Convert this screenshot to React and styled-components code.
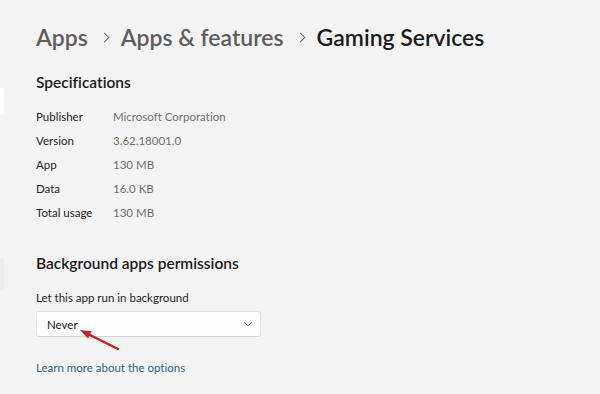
import styled, { createGlobalStyle } from "styled-components";

const GlobalStyle = createGlobalStyle`
  html, body {
    margin: 0;
    padding: 0;
    background: #f3f3f3;
  }
  body {
    font-family: Lato, "Noto Sans", sans-serif;
    font-variant-ligatures: none;
    color: #1b1b1b;
  }
`;

const specs = [
  ["Publisher", "Microsoft Corporation"],
  ["Version", "3.62.18001.0"],
  ["App", "130 MB"],
  ["Data", "16.0 KB"],
  ["Total usage", "130 MB"],
];

function App() {
  return (
    <>
      <GlobalStyle />
      <Page>
        <EdgeTab $top={88} $height={27} $bg="#ffffff" />
        <EdgeTab $top={258} $height={32} $bg="#ececec" />
        <Breadcrumb>
          <Crumb>Apps</Crumb>
          <Chevron />
          <Crumb>Apps &amp; features</Crumb>
          <Chevron />
          <Crumb $current>Gaming Services</Crumb>
        </Breadcrumb>

        <SectionTitle>Specifications</SectionTitle>
        <SpecList>
          {specs.map(([label, value]) => (
            <SpecRow key={label}>
              <SpecLabel>{label}</SpecLabel>
              <SpecValue>{value}</SpecValue>
            </SpecRow>
          ))}
        </SpecList>

        <SectionTitle $gap={27}>Background apps permissions</SectionTitle>
        <FieldLabel>Let this app run in background</FieldLabel>
        <SelectWrap>
          <Select>
            <span>Never</span>
            <svg width="10" height="6" viewBox="0 0 10 6">
              <path d="M1 1l4 4 4-4" fill="none" stroke="#7a7a7a" strokeWidth="1" />
            </svg>
          </Select>
          <Arrow width="50" height="30" viewBox="0 0 50 30">
            <path d="M44 26 L14 11" stroke="#cc1f1f" strokeWidth="2.4" strokeLinecap="round" />
            <path d="M6 7 L17.6 8.3 L14 15.5 Z" fill="#cc1f1f" />
          </Arrow>
        </SelectWrap>
        <Link>Learn more about the options</Link>
      </Page>
    </>
  );
}

const Page = styled.div`
  position: relative;
  width: 600px;
  height: 394px;
  padding: 20px 0 0 36px;
  box-sizing: border-box;
  overflow: hidden;
`;

const EdgeTab = styled.div`
  position: absolute;
  left: 0;
  top: ${(p) => p.$top}px;
  width: 4px;
  height: ${(p) => p.$height}px;
  background: ${(p) => p.$bg};
  border-radius: 0 3px 3px 0;
`;

const Breadcrumb = styled.div`
  display: flex;
  align-items: center;
  gap: 13px;
  height: 34px;
`;

const Crumb = styled.span`
  font-size: 23px;
  font-weight: 600;
  color: ${(p) => (p.$current ? "#1a1a1a" : "#5d5d5d")};
`;

const Chevron = styled.span`
  width: 6px;
  height: 6px;
  border-top: 1.5px solid #6a6a6a;
  border-right: 1.5px solid #6a6a6a;
  transform: rotate(45deg);
`;

const SectionTitle = styled.div`
  font-size: 15.5px;
  font-weight: 600;
  color: #1a1a1a;
  margin-top: ${(p) => p.$gap ?? 16}px;
  height: 24px;
  line-height: 24px;
`;

const SpecList = styled.div`
  display: flex;
  flex-direction: column;
  margin-top: 10px;
`;

const SpecRow = styled.div`
  display: flex;
  height: 24px;
  align-items: center;
  font-size: 11.5px;
`;

const SpecLabel = styled.span`
  width: 77px;
  color: #222;
`;

const SpecValue = styled.span`
  color: #6e6e6e;
`;

const FieldLabel = styled.div`
  font-size: 11.5px;
  color: #222;
  margin-top: 16px;
`;

const SelectWrap = styled.div`
  position: relative;
  margin-top: 7px;
  width: 225px;
`;

const Select = styled.div`
  display: flex;
  align-items: center;
  justify-content: space-between;
  height: 24px;
  padding: 0 7px 0 10px;
  background: #fdfdfd;
  border: 1px solid #e2e2e2;
  border-bottom-color: #d4d4d4;
  border-radius: 3px;
  font-size: 11.5px;
  color: #1a1a1a;
`;

const Arrow = styled.svg`
  position: absolute;
  left: 38px;
  top: 12px;
`;

const Link = styled.div`
  margin-top: 24px;
  font-size: 11.5px;
  color: #2f5f8e;
`;

export default App;
